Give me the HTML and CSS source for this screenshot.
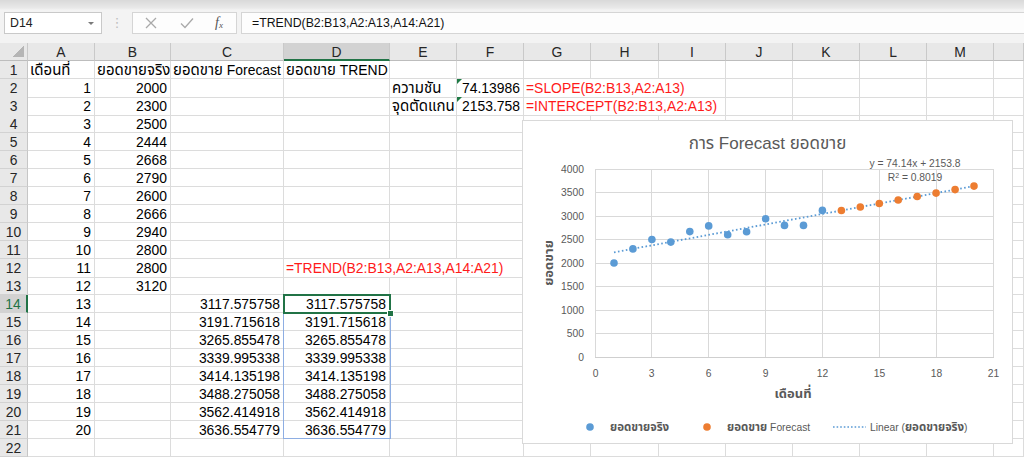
FILE: index.html
```html
<!DOCTYPE html>
<html>
<head>
<meta charset="utf-8">
<link rel="stylesheet" href="styles.css">
</head>
<body>
<div class="fbar">
  <div class="namebox"><span>D14</span><i class="caret"></i></div>
  <div class="grip">⋮</div>
  <div class="btns">
    <svg class="ico" width="12" height="12" viewBox="0 0 12 12"><path d="M1 1L11 11M11 1L1 11" stroke="#a9a9a9" stroke-width="1.3" fill="none"/></svg>
    <svg class="ico" width="14" height="12" viewBox="0 0 14 12"><path d="M1 6.5L5 10.5L13 1.5" stroke="#a9a9a9" stroke-width="1.3" fill="none"/></svg>
    <span class="fx">f<sub>x</sub></span>
  </div>
  <div class="formula">=TREND(B2:B13,A2:A13,A14:A21)</div>
</div>

<div class="sheet">
  <div class="row hdr"><span class="corner"></span><span>A</span><span>B</span><span>C</span><span class="hsel">D</span><span>E</span><span>F</span><span>G</span><span>H</span><span>I</span><span>J</span><span>K</span><span>L</span><span>M</span><span></span></div>
  <div class="row"><span class="rh">1</span><span><b class="th">เดือนที่</b></span><span><b class="th">ยอดขายจริง</b></span><span><b class="th">ยอดขาย</b> Forecast</span><span><b class="th">ยอดขาย</b> TREND</span><span></span><span></span><span></span><span></span><span></span><span></span><span></span><span></span><span></span><span></span></div>
  <div class="row"><span class="rh">2</span><span class="n">1</span><span class="n">2000</span><span></span><span></span><span><b class="th">ความชัน</b></span><span class="n flag">74.13986</span><span class="red">=SLOPE(B2:B13,A2:A13)</span><span></span><span></span><span></span><span></span><span></span></div>
  <div class="row"><span class="rh">3</span><span class="n">2</span><span class="n">2300</span><span></span><span></span><span><b class="th">จุดตัดแกน</b></span><span class="n flag">2153.758</span><span class="red">=INTERCEPT(B2:B13,A2:A13)</span><span></span><span></span><span></span><span></span><span></span></div>
  <div class="row"><span class="rh">4</span><span class="n">3</span><span class="n">2500</span><span></span><span></span><span></span><span></span><span></span><span></span><span></span><span></span><span></span><span></span><span></span><span></span></div>
  <div class="row"><span class="rh">5</span><span class="n">4</span><span class="n">2444</span><span></span><span></span><span></span><span></span><span></span><span></span><span></span><span></span><span></span><span></span><span></span><span></span></div>
  <div class="row"><span class="rh">6</span><span class="n">5</span><span class="n">2668</span><span></span><span></span><span></span><span></span><span></span><span></span><span></span><span></span><span></span><span></span><span></span><span></span></div>
  <div class="row"><span class="rh">7</span><span class="n">6</span><span class="n">2790</span><span></span><span></span><span></span><span></span><span></span><span></span><span></span><span></span><span></span><span></span><span></span><span></span></div>
  <div class="row"><span class="rh">8</span><span class="n">7</span><span class="n">2600</span><span></span><span></span><span></span><span></span><span></span><span></span><span></span><span></span><span></span><span></span><span></span><span></span></div>
  <div class="row"><span class="rh">9</span><span class="n">8</span><span class="n">2666</span><span></span><span></span><span></span><span></span><span></span><span></span><span></span><span></span><span></span><span></span><span></span><span></span></div>
  <div class="row"><span class="rh">10</span><span class="n">9</span><span class="n">2940</span><span></span><span></span><span></span><span></span><span></span><span></span><span></span><span></span><span></span><span></span><span></span><span></span></div>
  <div class="row"><span class="rh">11</span><span class="n">10</span><span class="n">2800</span><span></span><span></span><span></span><span></span><span></span><span></span><span></span><span></span><span></span><span></span><span></span><span></span></div>
  <div class="row"><span class="rh">12</span><span class="n">11</span><span class="n">2800</span><span></span><span class="red">=TREND(B2:B13,A2:A13,A14:A21)</span><span></span><span></span><span></span><span></span><span></span><span></span><span></span><span></span></div>
  <div class="row"><span class="rh">13</span><span class="n">12</span><span class="n">3120</span><span></span><span></span><span></span><span></span><span></span><span></span><span></span><span></span><span></span><span></span><span></span><span></span></div>
  <div class="row"><span class="rh rsel">14</span><span class="n">13</span><span></span><span class="n">3117.575758</span><span class="n">3117.575758</span><span></span><span></span><span></span><span></span><span></span><span></span><span></span><span></span><span></span><span></span></div>
  <div class="row"><span class="rh">15</span><span class="n">14</span><span></span><span class="n">3191.715618</span><span class="n">3191.715618</span><span></span><span></span><span></span><span></span><span></span><span></span><span></span><span></span><span></span><span></span></div>
  <div class="row"><span class="rh">16</span><span class="n">15</span><span></span><span class="n">3265.855478</span><span class="n">3265.855478</span><span></span><span></span><span></span><span></span><span></span><span></span><span></span><span></span><span></span><span></span></div>
  <div class="row"><span class="rh">17</span><span class="n">16</span><span></span><span class="n">3339.995338</span><span class="n">3339.995338</span><span></span><span></span><span></span><span></span><span></span><span></span><span></span><span></span><span></span><span></span></div>
  <div class="row"><span class="rh">18</span><span class="n">17</span><span></span><span class="n">3414.135198</span><span class="n">3414.135198</span><span></span><span></span><span></span><span></span><span></span><span></span><span></span><span></span><span></span><span></span></div>
  <div class="row"><span class="rh">19</span><span class="n">18</span><span></span><span class="n">3488.275058</span><span class="n">3488.275058</span><span></span><span></span><span></span><span></span><span></span><span></span><span></span><span></span><span></span><span></span></div>
  <div class="row"><span class="rh">20</span><span class="n">19</span><span></span><span class="n">3562.414918</span><span class="n">3562.414918</span><span></span><span></span><span></span><span></span><span></span><span></span><span></span><span></span><span></span><span></span></div>
  <div class="row"><span class="rh">21</span><span class="n">20</span><span></span><span class="n">3636.554779</span><span class="n">3636.554779</span><span></span><span></span><span></span><span></span><span></span><span></span><span></span><span></span><span></span><span></span></div>
  <div class="row"><span class="rh">22</span><span></span><span></span><span></span><span></span><span></span><span></span><span></span><span></span><span></span><span></span><span></span><span></span><span></span><span></span></div>

  <div class="range"></div>
  <div class="active"><i class="handle"></i></div>

  <div class="chart">
    <svg width="491" height="324" viewBox="0 0 491 324">
      <text class="ttl" x="245.5" y="29" text-anchor="middle">การ Forecast ยอดขาย</text>
      <g stroke="#d9d9d9" stroke-width="1" fill="none">
        <path d="M73 49.5H471M73 72.5H471M73 96.5H471M73 119.5H471M73 143.5H471M73 166.5H471M73 190.5H471M73 213.5H471"/>
        <path d="M73.5 49V237M129.5 49V237M186.5 49V237M243.5 49V237M300.5 49V237M357.5 49V237M414.5 49V237M471.5 49V237"/>
      </g>
      <path d="M73 237.5H472" stroke="#cfcfcf" stroke-width="1"/>
      <g class="lbl" text-anchor="end">
        <text x="62" y="53">4000</text>
        <text x="62" y="76">3500</text>
        <text x="62" y="100">3000</text>
        <text x="62" y="123">2500</text>
        <text x="62" y="147">2000</text>
        <text x="62" y="170">1500</text>
        <text x="62" y="194">1000</text>
        <text x="62" y="217">500</text>
        <text x="62" y="241">0</text>
      </g>
      <g class="lbl" text-anchor="middle">
        <text x="73.5" y="257">0</text>
        <text x="129.5" y="257">3</text>
        <text x="186.5" y="257">6</text>
        <text x="243.5" y="257">9</text>
        <text x="300.5" y="257">12</text>
        <text x="357.5" y="257">15</text>
        <text x="414.5" y="257">18</text>
        <text x="471.5" y="257">21</text>
      </g>
      <text class="axt" x="271" y="278" text-anchor="middle">เดือนที่</text>
      <text class="axt" transform="translate(31 143) rotate(-90)" text-anchor="middle">ยอดขาย</text>
      <text class="lbl" x="393" y="47" text-anchor="middle">y = 74.14x + 2153.8</text>
      <text class="lbl" x="393" y="61" text-anchor="middle">R<tspan class="sup" dy="-3">2</tspan><tspan dy="3"> = 0.8019</tspan></text>
      <path d="M92 132.3L452 66.1" stroke="#5b9bd5" stroke-width="1.8" stroke-dasharray="1.6 2.4" fill="none"/>
      <g fill="#5b9bd5">
        <circle cx="92" cy="143" r="3.8"/>
        <circle cx="110.9" cy="128.9" r="3.8"/>
        <circle cx="129.9" cy="119.5" r="3.8"/>
        <circle cx="148.8" cy="122.1" r="3.8"/>
        <circle cx="167.8" cy="111.6" r="3.8"/>
        <circle cx="186.7" cy="105.9" r="3.8"/>
        <circle cx="205.7" cy="114.8" r="3.8"/>
        <circle cx="224.6" cy="111.7" r="3.8"/>
        <circle cx="243.6" cy="98.8" r="3.8"/>
        <circle cx="262.5" cy="105.4" r="3.8"/>
        <circle cx="281.5" cy="105.4" r="3.8"/>
        <circle cx="300.4" cy="90.4" r="3.8"/>
      </g>
      <g fill="#ed7d31">
        <circle cx="319.4" cy="90.5" r="3.8"/>
        <circle cx="338.3" cy="87" r="3.8"/>
        <circle cx="357.3" cy="83.5" r="3.8"/>
        <circle cx="376.2" cy="80" r="3.8"/>
        <circle cx="395.2" cy="76.5" r="3.8"/>
        <circle cx="414.1" cy="73.1" r="3.8"/>
        <circle cx="433.1" cy="69.6" r="3.8"/>
        <circle cx="452" cy="66.1" r="3.8"/>
      </g>
      <circle cx="68" cy="307" r="3.8" fill="#5b9bd5"/>
      <text class="lg" x="88" y="311"><tspan class="lth">ยอดขายจริง</tspan></text>
      <circle cx="185" cy="307" r="3.8" fill="#ed7d31"/>
      <text class="lg" x="205" y="311"><tspan class="lth">ยอดขาย</tspan> Forecast</text>
      <path d="M311 307H344" stroke="#5b9bd5" stroke-width="1.6" stroke-dasharray="1.6 2" fill="none"/>
      <text class="lg" x="348" y="311">Linear (<tspan class="lth">ยอดขายจริง</tspan>)</text>
    </svg>
  </div>
</div>
</body>
</html>
```

FILE: styles.css
```css
html, body {
  margin: 0;
  padding: 0;
}
body {
  width: 1024px;
  height: 458px;
  overflow: hidden;
  background: #ffffff;
  font-family: "Liberation Sans", "Noto Sans Thai", Tahoma, "DejaVu Sans", sans-serif;
  color: #000;
}

/* formula bar */
.fbar {
  height: 43px;
  box-sizing: border-box;
  padding: 12px 0 0 4px;
  display: flex;
  align-items: flex-start;
  background: linear-gradient(#d9d9d9 0, #e9e9e9 8px, #f3f3f3 10px, #f3f3f3 100%);
  font-size: 12.3px;
  color: #222;
}
.namebox {
  width: 98px;
  height: 22px;
  box-sizing: border-box;
  border: 1px solid #c9c9c9;
  background: #fff;
  display: flex;
  align-items: center;
  justify-content: space-between;
  padding: 0 7px 0 5px;
}
.caret {
  width: 0;
  height: 0;
  border-left: 3px solid transparent;
  border-right: 3px solid transparent;
  border-top: 3px solid #7a7a7a;
}
.grip {
  width: 30px;
  height: 22px;
  line-height: 22px;
  text-align: center;
  color: #bdbdbd;
  font-size: 13px;
}
.btns {
  width: 105px;
  height: 22px;
  box-sizing: border-box;
  border: 1px solid #d5d5d5;
  background: #fdfdfd;
  display: flex;
  align-items: center;
  padding-left: 12px;
  gap: 23px;
}
.fx {
  font-family: "Liberation Serif", serif;
  font-style: italic;
  font-size: 14px;
  color: #555;
  margin-left: -2px;
}
.fx sub {
  font-size: 9px;
  vertical-align: -1px;
}
.formula {
  flex: 1;
  height: 22px;
  box-sizing: border-box;
  margin-left: 4px;
  border: 1px solid #d5d5d5;
  border-right: 0;
  background: #fdfdfd;
  padding-left: 10px;
  line-height: 20px;
  color: #111;
}

/* sheet */
.sheet {
  position: relative;
}
.row {
  display: grid;
  grid-template-columns: 28px 67px 76px 113px 106px 67px 67px 67px 68px 67px 67px 67px 67px 67px 1fr;
  height: 18px;
}
.row > span {
  box-sizing: border-box;
  border-right: 1px solid #dcdcdc;
  border-bottom: 1px solid #dcdcdc;
  font-size: 13.9px;
  line-height: 18px;
  white-space: nowrap;
  padding: 0 3px 0 2px;
  overflow: hidden;
  position: relative;
}
.row .th {
  font-weight: normal;
  font-size: 15px;
}
.row > span.n {
  text-align: right;
}
.row > span.rh {
  background: #e8e8e8;
  text-align: center;
  color: #262626;
  padding: 0;
  border-right-color: #c6c6c6;
  border-bottom-color: #d2d2d2;
}
.row > span.rsel {
  background: #d2d2d2;
  color: #217346;
  border-right: 2px solid #217346;
}
.row > span.red {
  grid-column: span 3;
  color: #ff1a1a;
  overflow: visible;
}
.row > span.flag::before {
  content: "";
  position: absolute;
  left: 0;
  top: 0;
  border-top: 5px solid #1f7a45;
  border-right: 5px solid transparent;
}

.hdr > span {
  background: #e8e8e8;
  text-align: center;
  color: #262626;
  padding: 0;
  border-right-color: #c9c9c9;
  border-bottom: 1px solid #bdbdbd;
}
.hdr > span.hsel {
  background: #d2d2d2;
  border-bottom: 2px solid #217346;
}
.hdr > span.corner::after {
  content: "";
  position: absolute;
  right: 3px;
  bottom: 3px;
  width: 11px;
  height: 11px;
  background: linear-gradient(135deg, transparent 50%, #b5b5b5 50%);
}

/* selection overlays */
.range {
  position: absolute;
  left: 283px;
  top: 251px;
  width: 108px;
  height: 145px;
  box-sizing: border-box;
  border: 1px solid #8eaee3;
}
.active {
  position: absolute;
  left: 283px;
  top: 251px;
  width: 108px;
  height: 20px;
  box-sizing: border-box;
  border: 2px solid #217346;
}
.handle {
  position: absolute;
  right: -5px;
  bottom: -5px;
  width: 5px;
  height: 5px;
  background: #217346;
  border: 1px solid #fff;
}

/* chart */
.chart {
  position: absolute;
  left: 522px;
  top: 77px;
  width: 491px;
  height: 324px;
  box-sizing: border-box;
  background: #fff;
  border: 1px solid #d9d9d9;
}
.chart svg {
  position: absolute;
  left: -1px;
  top: -1px;
  font-family: "Liberation Sans", "Noto Sans Thai", Tahoma, sans-serif;
}
.chart .ttl {
  font-size: 17px;
  fill: #595959;
}
.chart .lbl {
  font-size: 10.3px;
  fill: #595959;
}
.chart .sup {
  font-size: 7px;
}
.chart .axt {
  font-size: 13px;
  font-weight: bold;
  fill: #595959;
}
.chart .lg {
  font-size: 10.3px;
  fill: #595959;
}
.chart .lth {
  font-size: 11.5px;
  font-weight: bold;
}
```
